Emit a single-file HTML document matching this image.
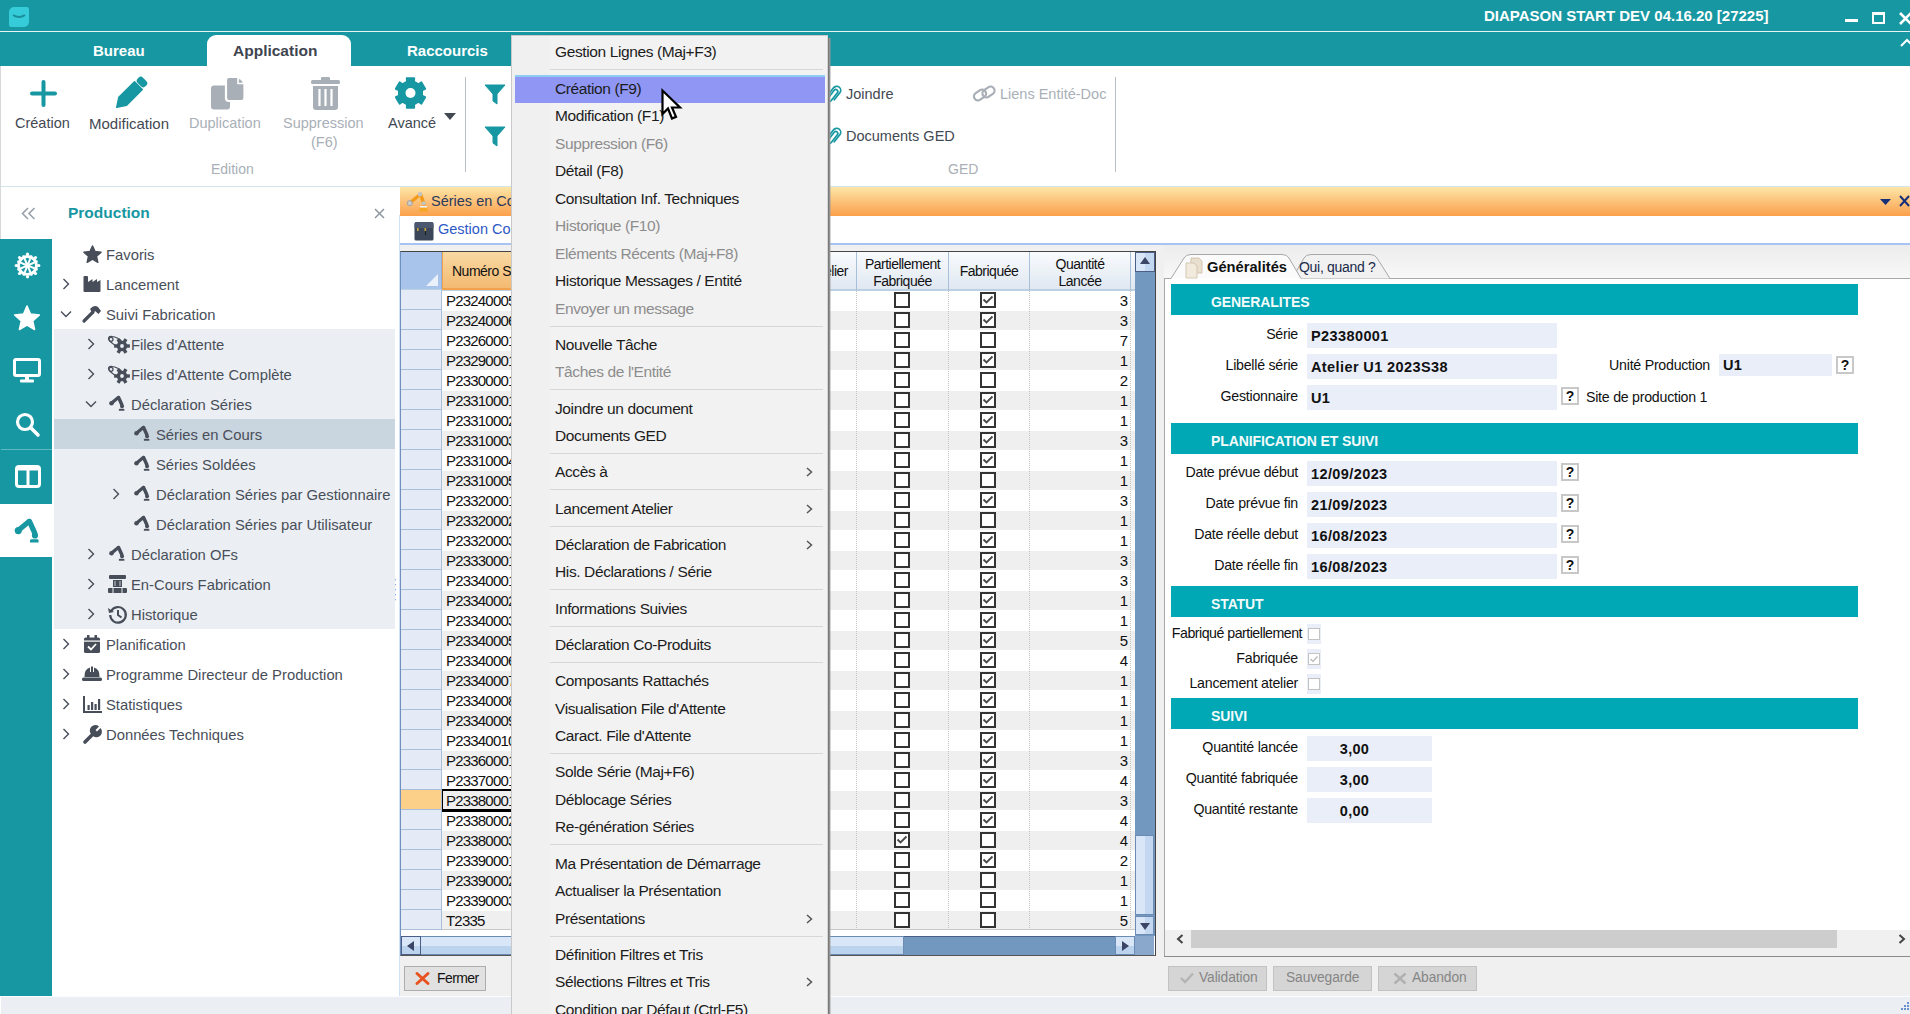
<!DOCTYPE html><html><head><meta charset="utf-8"><title>Diapason</title><style>
*{margin:0;padding:0;box-sizing:border-box}
html,body{width:1910px;height:1014px;overflow:hidden;background:#fff;font-family:"Liberation Sans",sans-serif;position:relative}
.a{position:absolute}
.t{position:absolute;white-space:nowrap;line-height:1}
svg{position:absolute;overflow:visible}
</style></head><body>
<div class="a" style="left:0;top:0;width:1910px;height:31px;background:#1797a2"></div>
<div class="a" style="left:0;top:31px;width:1910px;height:1px;background:#e8f4f5"></div>
<div class="a" style="left:0;top:32px;width:1910px;height:34px;background:#1797a2"></div>
<div class="a" style="left:0;top:66px;width:1px;height:930px;background:#d6d9dc"></div>
<div class="a" style="left:9px;top:7px;width:20px;height:20px;background:#35cbd9;border-radius:5px 2px 5px 2px"></div>
<svg style="left:12px;top:14px" width="14" height="6"><path d="M1 1 Q7 5 13 1" stroke="#1b8f99" stroke-width="2" fill="none"/></svg>
<div class="t" style="left:1484px;top:8px;font-size:15px;font-weight:bold;color:#fff">DIAPASON START DEV 04.16.20 [27225]</div>
<div class="a" style="left:1845px;top:19px;width:13px;height:3px;background:#fff"></div>
<div class="a" style="left:1872px;top:12px;width:13px;height:12px;border:2px solid #fff;border-top-width:3px"></div>
<svg style="left:1899px;top:12px" width="14" height="13"><path d="M1 1 L12 12 M12 1 L1 12" stroke="#fff" stroke-width="2.6"/></svg>
<svg style="left:1900px;top:39px" width="14" height="8"><path d="M1 7 L7 1 L13 7" stroke="#fff" stroke-width="2" fill="none"/></svg>
<div class="t" style="left:93px;top:43px;font-size:15px;font-weight:bold;color:#fff">Bureau</div>
<div class="a" style="left:207px;top:35px;width:144px;height:31px;background:#fff;border-radius:9px 9px 0 0"></div>
<div class="t" style="left:233px;top:43px;font-size:15.5px;font-weight:bold;color:#3f4550">Application</div>
<div class="t" style="left:407px;top:43px;font-size:15px;font-weight:bold;color:#fff">Raccourcis</div>
<div class="a" style="left:1px;top:186px;width:1909px;height:1px;background:#d5e3ea"></div>
<svg style="left:30px;top:80px" width="27" height="27"><path d="M13.5 2 V25 M2 13.5 H25" stroke="#1797a2" stroke-width="4" stroke-linecap="round"/></svg>
<div class="t" style="left:15px;top:116px;font-size:14.5px;color:#434953">Création</div>
<svg style="left:113px;top:76px" width="35" height="35"><g transform="rotate(45 17.5 17.5)"><rect x="12" y="-2.5" width="11" height="7.5" rx="3.2" fill="#1797a2"/><path d="M12 6.3 H23 V28.5 L17.5 37 L12 28.5 Z" fill="#1797a2" stroke="#1797a2" stroke-linejoin="round" stroke-width="1.5"/></g></svg>
<div class="t" style="left:89px;top:116px;font-size:15px;color:#434953">Modification</div>
<svg style="left:211px;top:76px" width="34" height="34"><rect x="0" y="9.5" width="19" height="24" rx="3" fill="#a9afb7"/><path d="M15 4 Q15 1 18 1 H27 L33.5 7.5 V22 Q33.5 25 30.5 25 H18 Q15 25 15 22 Z" fill="#a9afb7" stroke="#fff" stroke-width="2.2"/><path d="M27 1 V7.5 H33.5" fill="none" stroke="#fff" stroke-width="1.6"/><path d="M28.3 2.5 L32 6.3 H28.3 Z" fill="#a9afb7"/></svg>
<div class="t" style="left:189px;top:116px;font-size:14.5px;color:#a9afb7">Duplication</div>
<svg style="left:311px;top:77px" width="30" height="33"><rect x="0" y="3" width="29" height="4" rx="1.5" fill="#a9afb7"/><rect x="10" y="0" width="9" height="4" rx="1" fill="#a9afb7"/><path d="M2 9 H27 V30 Q27 33 24 33 H5 Q2 33 2 30 Z" fill="#a9afb7"/><path d="M8.5 12 V29 M14.5 12 V29 M20.5 12 V29" stroke="#fff" stroke-width="2.2"/></svg>
<div class="t" style="left:283px;top:116px;font-size:14.5px;color:#a9afb7">Suppression</div>
<div class="t" style="left:311px;top:135px;font-size:14.5px;color:#a9afb7">(F6)</div>
<svg style="left:395px;top:77px" width="31" height="33"><path d="M11.8 1.3 L19.2 1.3 L18.9 4.7 L23.5 7.4 L26.4 5.4 L30.1 11.8 L27.0 13.3 L27.0 18.7 L30.1 20.2 L26.4 26.6 L23.5 24.6 L18.9 27.3 L19.2 30.7 L11.8 30.7 L12.1 27.3 L7.5 24.6 L4.6 26.6 L0.9 20.2 L4.0 18.7 L4.0 13.3 L0.9 11.8 L4.6 5.4 L7.5 7.4 L12.1 4.7 Z" fill="#1797a2" stroke="#1797a2" stroke-width="2" stroke-linejoin="round"/><circle cx="15.5" cy="16" r="5" fill="#fff"/></svg>
<div class="t" style="left:388px;top:116px;font-size:14.5px;color:#434953">Avancé</div>
<svg style="left:444px;top:113px" width="12" height="7"><path d="M0 0 H12 L6 7 Z" fill="#434953"/></svg>
<div class="t" style="left:211px;top:162px;font-size:14px;color:#a9afb7">Edition</div>
<div class="a" style="left:465px;top:77px;width:1px;height:95px;background:#b8bec5"></div>
<svg style="left:485px;top:85px" width="20" height="19"><path d="M0 0 H20 L12 9 V19 L8 16 V9 Z" fill="#1797a2" stroke="#1797a2" stroke-linejoin="round"/></svg>
<svg style="left:485px;top:127px" width="20" height="19"><path d="M0 0 H20 L12 9 V19 L8 16 V9 Z" fill="#1797a2" stroke="#1797a2" stroke-linejoin="round"/></svg>
<svg style="left:826px;top:85px" width="14" height="20"><g transform="rotate(38 7 10)" fill="none" stroke="#1797a2" stroke-width="1.7" stroke-linecap="round"><path d="M5 14 V5.5 A2 2 0 0 1 9 5.5 V15 A3 3 0 0 1 3 15 V4 A4 4 0 0 1 11 4 V13"/></g></svg>
<div class="t" style="left:846px;top:87px;font-size:14.5px;color:#434953">Joindre</div>
<svg style="left:826px;top:127px" width="14" height="20"><g transform="rotate(38 7 10)" fill="none" stroke="#1797a2" stroke-width="1.7" stroke-linecap="round"><path d="M5 14 V5.5 A2 2 0 0 1 9 5.5 V15 A3 3 0 0 1 3 15 V4 A4 4 0 0 1 11 4 V13"/></g></svg>
<div class="t" style="left:846px;top:129px;font-size:14.5px;color:#434953">Documents GED</div>
<svg style="left:972px;top:85px" width="26" height="18"><g fill="none" stroke="#a9afb7" stroke-width="2.2"><rect x="1.5" y="6" width="13" height="8" rx="4" transform="rotate(-35 8 10)"/><rect x="10" y="3" width="13" height="8" rx="4" transform="rotate(-35 16.5 7)"/></g></svg>
<div class="t" style="left:1000px;top:87px;font-size:14.5px;color:#a9afb7">Liens Entité-Doc</div>
<div class="t" style="left:948px;top:162px;font-size:14px;color:#a9afb7">GED</div>
<div class="a" style="left:1115px;top:77px;width:1px;height:95px;background:#b8bec5"></div>
<div class="a" style="left:0;top:239px;width:52px;height:757px;background:#1797a2"></div>
<div class="a" style="left:1px;top:449px;width:51px;height:1px;background:#5fb9c0"></div>
<div class="a" style="left:0;top:504px;width:52px;height:53px;background:#fff"></div>
<svg style="left:15px;top:253px" width="25" height="25"><g stroke="#fff" stroke-width="2" fill="none"><circle cx="12.5" cy="12.5" r="9" stroke-width="3"/><line x1="12.5" y1="12.5" x2="22.7" y2="16.6"/><line x1="12.5" y1="12.5" x2="16.8" y2="22.6"/><line x1="12.5" y1="12.5" x2="8.4" y2="22.7"/><line x1="12.5" y1="12.5" x2="2.4" y2="16.8"/><line x1="12.5" y1="12.5" x2="2.3" y2="8.4"/><line x1="12.5" y1="12.5" x2="8.2" y2="2.4"/><line x1="12.5" y1="12.5" x2="16.6" y2="2.3"/><line x1="12.5" y1="12.5" x2="22.6" y2="8.2"/></g><g fill="#fff"><circle cx="23.8" cy="12.5" r="1.6"/><circle cx="20.5" cy="20.5" r="1.6"/><circle cx="12.5" cy="23.8" r="1.6"/><circle cx="4.5" cy="20.5" r="1.6"/><circle cx="1.2" cy="12.5" r="1.6"/><circle cx="4.5" cy="4.5" r="1.6"/><circle cx="12.5" cy="1.2" r="1.6"/><circle cx="20.5" cy="4.5" r="1.6"/></g><circle cx="12.5" cy="12.5" r="2.6" fill="#fff"/></svg>
<svg style="left:13px;top:304px" width="28" height="28"><path d="M14.0 2.0 L17.5 10.1 L26.4 11.0 L19.7 16.9 L21.6 25.5 L14.0 21.0 L6.4 25.5 L8.3 16.9 L1.6 11.0 L10.5 10.1 Z" fill="#fff" stroke="#fff" stroke-width="1.5" stroke-linejoin="round"/></svg>
<svg style="left:13px;top:358px" width="28" height="25"><rect x="1.5" y="1.5" width="25" height="16" rx="1.5" fill="none" stroke="#fff" stroke-width="3"/><rect x="12" y="18" width="4" height="4" fill="#fff"/><rect x="7" y="21.5" width="14" height="3" rx="1" fill="#fff"/></svg>
<svg style="left:15px;top:412px" width="26" height="25"><circle cx="10" cy="10" r="7.5" fill="none" stroke="#fff" stroke-width="3.2"/><path d="M15.5 15.5 L23 23" stroke="#fff" stroke-width="3.6" stroke-linecap="round"/></svg>
<svg style="left:15px;top:465px" width="26" height="23"><rect x="1.5" y="1.5" width="23" height="20" rx="2.5" fill="none" stroke="#fff" stroke-width="3"/><rect x="1.5" y="1.5" width="23" height="4" fill="#fff"/><path d="M13 4 V21" stroke="#fff" stroke-width="3"/></svg>
<svg style="left:13px;top:516px" width="28" height="30" viewBox="0 0 28 30"><g fill="#1797a2" stroke="#1797a2" stroke-linecap="round"><circle cx="5.3" cy="14.6" r="3.6" stroke="none"/><path d="M7.5 12.5 L16 5.5" stroke-width="5.2"/><path d="M16.5 5.5 L21.5 16.5" stroke-width="5.4"/><circle cx="22" cy="19.4" r="3.1" stroke="none"/><path d="M17 26.6 V24.5 Q17 23.2 18.5 23.2 H24.2 Q25.6 23.2 25.6 24.5 V26.6 Z" stroke="none"/></g></svg>
<svg style="left:21px;top:207px" width="15" height="13"><path d="M7 1 L1.5 6.5 L7 12 M13.5 1 L8 6.5 L13.5 12" stroke="#98a0aa" stroke-width="1.6" fill="none"/></svg>
<div class="t" style="left:68px;top:205px;font-size:15.5px;font-weight:bold;color:#1797a2">Production</div>
<svg style="left:374px;top:208px" width="11" height="11"><path d="M1 1 L10 10 M10 1 L1 10" stroke="#8e969f" stroke-width="1.5"/></svg>
<div class="a" style="left:54px;top:329px;width:341px;height:300px;background:#ebeff3"></div>
<div class="a" style="left:54px;top:419px;width:341px;height:30px;background:#c9d5df"></div>
<svg style="left:83px;top:245px" width="19" height="19"><path d="M9.5 1.0 L12.0 6.6 L18.1 7.2 L13.5 11.3 L14.8 17.3 L9.5 14.2 L4.2 17.3 L5.5 11.3 L0.9 7.2 L7.0 6.6 Z" fill="#484e59" stroke="#484e59" stroke-width="1.5" stroke-linejoin="round"/></svg>
<div class="t" style="left:106px;top:247.9px;font-size:14.8px;color:#484e59">Favoris</div>
<svg style="left:62px;top:278px" width="8" height="12"><path d="M1.5 1 L6.5 6 L1.5 11" stroke="#484e59" stroke-width="1.4" fill="none"/></svg>
<svg style="left:83px;top:276px" width="18" height="16"><path d="M0.5 1 Q0.5 0 1.5 0 H4 Q5 0 5 1 V6 L9.5 3 V6 L14 3 V6 L17.5 4 V15 Q17.5 16 16.5 16 H1.5 Q0.5 16 0.5 15 Z" fill="#484e59"/></svg>
<div class="t" style="left:106px;top:277.9px;font-size:14.8px;color:#484e59">Lancement</div>
<svg style="left:60px;top:310px" width="12" height="8"><path d="M1 1.5 L6 6.5 L11 1.5" stroke="#484e59" stroke-width="1.4" fill="none"/></svg>
<svg style="left:82px;top:305px" width="20" height="18"><path d="M2 16 L11 7" stroke="#484e59" stroke-width="3.2" stroke-linecap="round"/><path d="M8 4 Q12 -1 16 2 L19 6 L16.5 9 L13 6 L10.5 8.5 Z" fill="#484e59"/></svg>
<div class="t" style="left:106px;top:307.9px;font-size:14.8px;color:#484e59">Suivi Fabrication</div>
<svg style="left:87px;top:338px" width="8" height="12"><path d="M1.5 1 L6.5 6 L1.5 11" stroke="#484e59" stroke-width="1.4" fill="none"/></svg>
<svg style="left:107px;top:335px" width="22" height="19"><ellipse cx="9" cy="6.5" rx="8.3" ry="3.6" transform="rotate(28 9 6.5)" fill="none" stroke="#484e59" stroke-width="1.2"/><circle cx="4" cy="4.3" r="2" fill="none" stroke="#484e59" stroke-width="1.3"/><rect x="19.5" y="9.3" width="3.4" height="3.4" transform="rotate(0 21.2 11.0)" fill="#484e59"/><rect x="16.4" y="14.7" width="3.4" height="3.4" transform="rotate(60 18.1 16.4)" fill="#484e59"/><rect x="10.2" y="14.7" width="3.4" height="3.4" transform="rotate(120 11.9 16.4)" fill="#484e59"/><rect x="7.1" y="9.3" width="3.4" height="3.4" transform="rotate(180 8.8 11.0)" fill="#484e59"/><rect x="10.2" y="3.9" width="3.4" height="3.4" transform="rotate(240 11.9 5.6)" fill="#484e59"/><rect x="16.4" y="3.9" width="3.4" height="3.4" transform="rotate(300 18.1 5.6)" fill="#484e59"/><circle cx="15" cy="11" r="5.3" fill="#484e59"/><circle cx="15" cy="11" r="1.9" fill="#ebeff3"/></svg>
<div class="t" style="left:131px;top:337.9px;font-size:14.8px;color:#484e59">Files d'Attente</div>
<svg style="left:87px;top:368px" width="8" height="12"><path d="M1.5 1 L6.5 6 L1.5 11" stroke="#484e59" stroke-width="1.4" fill="none"/></svg>
<svg style="left:107px;top:365px" width="22" height="19"><ellipse cx="9" cy="6.5" rx="8.3" ry="3.6" transform="rotate(28 9 6.5)" fill="none" stroke="#484e59" stroke-width="1.2"/><circle cx="4" cy="4.3" r="2" fill="none" stroke="#484e59" stroke-width="1.3"/><rect x="19.5" y="9.3" width="3.4" height="3.4" transform="rotate(0 21.2 11.0)" fill="#484e59"/><rect x="16.4" y="14.7" width="3.4" height="3.4" transform="rotate(60 18.1 16.4)" fill="#484e59"/><rect x="10.2" y="14.7" width="3.4" height="3.4" transform="rotate(120 11.9 16.4)" fill="#484e59"/><rect x="7.1" y="9.3" width="3.4" height="3.4" transform="rotate(180 8.8 11.0)" fill="#484e59"/><rect x="10.2" y="3.9" width="3.4" height="3.4" transform="rotate(240 11.9 5.6)" fill="#484e59"/><rect x="16.4" y="3.9" width="3.4" height="3.4" transform="rotate(300 18.1 5.6)" fill="#484e59"/><circle cx="15" cy="11" r="5.3" fill="#484e59"/><circle cx="15" cy="11" r="1.9" fill="#ebeff3"/></svg>
<div class="t" style="left:131px;top:367.9px;font-size:14.8px;color:#484e59">Files d'Attente Complète</div>
<svg style="left:85px;top:400px" width="12" height="8"><path d="M1 1.5 L6 6.5 L11 1.5" stroke="#484e59" stroke-width="1.4" fill="none"/></svg>
<svg style="left:108px;top:394px" width="18" height="19" viewBox="0 0 28 30"><g fill="#484e59" stroke="#484e59" stroke-linecap="round"><circle cx="5.3" cy="14.6" r="3.6" stroke="none"/><path d="M7.5 12.5 L16 5.5" stroke-width="5.2"/><path d="M16.5 5.5 L21.5 16.5" stroke-width="5.4"/><circle cx="22" cy="19.4" r="3.1" stroke="none"/><path d="M17 26.6 V24.5 Q17 23.2 18.5 23.2 H24.2 Q25.6 23.2 25.6 24.5 V26.6 Z" stroke="none"/></g></svg>
<div class="t" style="left:131px;top:397.9px;font-size:14.8px;color:#484e59">Déclaration Séries</div>
<svg style="left:133px;top:424px" width="18" height="19" viewBox="0 0 28 30"><g fill="#484e59" stroke="#484e59" stroke-linecap="round"><circle cx="5.3" cy="14.6" r="3.6" stroke="none"/><path d="M7.5 12.5 L16 5.5" stroke-width="5.2"/><path d="M16.5 5.5 L21.5 16.5" stroke-width="5.4"/><circle cx="22" cy="19.4" r="3.1" stroke="none"/><path d="M17 26.6 V24.5 Q17 23.2 18.5 23.2 H24.2 Q25.6 23.2 25.6 24.5 V26.6 Z" stroke="none"/></g></svg>
<div class="t" style="left:156px;top:427.9px;font-size:14.8px;color:#484e59">Séries en Cours</div>
<svg style="left:133px;top:454px" width="18" height="19" viewBox="0 0 28 30"><g fill="#484e59" stroke="#484e59" stroke-linecap="round"><circle cx="5.3" cy="14.6" r="3.6" stroke="none"/><path d="M7.5 12.5 L16 5.5" stroke-width="5.2"/><path d="M16.5 5.5 L21.5 16.5" stroke-width="5.4"/><circle cx="22" cy="19.4" r="3.1" stroke="none"/><path d="M17 26.6 V24.5 Q17 23.2 18.5 23.2 H24.2 Q25.6 23.2 25.6 24.5 V26.6 Z" stroke="none"/></g></svg>
<div class="t" style="left:156px;top:457.9px;font-size:14.8px;color:#484e59">Séries Soldées</div>
<svg style="left:112px;top:488px" width="8" height="12"><path d="M1.5 1 L6.5 6 L1.5 11" stroke="#484e59" stroke-width="1.4" fill="none"/></svg>
<svg style="left:133px;top:484px" width="18" height="19" viewBox="0 0 28 30"><g fill="#484e59" stroke="#484e59" stroke-linecap="round"><circle cx="5.3" cy="14.6" r="3.6" stroke="none"/><path d="M7.5 12.5 L16 5.5" stroke-width="5.2"/><path d="M16.5 5.5 L21.5 16.5" stroke-width="5.4"/><circle cx="22" cy="19.4" r="3.1" stroke="none"/><path d="M17 26.6 V24.5 Q17 23.2 18.5 23.2 H24.2 Q25.6 23.2 25.6 24.5 V26.6 Z" stroke="none"/></g></svg>
<div class="t" style="left:156px;top:487.9px;font-size:14.8px;color:#484e59">Déclaration Séries par Gestionnaire</div>
<svg style="left:133px;top:514px" width="18" height="19" viewBox="0 0 28 30"><g fill="#484e59" stroke="#484e59" stroke-linecap="round"><circle cx="5.3" cy="14.6" r="3.6" stroke="none"/><path d="M7.5 12.5 L16 5.5" stroke-width="5.2"/><path d="M16.5 5.5 L21.5 16.5" stroke-width="5.4"/><circle cx="22" cy="19.4" r="3.1" stroke="none"/><path d="M17 26.6 V24.5 Q17 23.2 18.5 23.2 H24.2 Q25.6 23.2 25.6 24.5 V26.6 Z" stroke="none"/></g></svg>
<div class="t" style="left:156px;top:517.9px;font-size:14.8px;color:#484e59">Déclaration Séries par Utilisateur</div>
<svg style="left:87px;top:548px" width="8" height="12"><path d="M1.5 1 L6.5 6 L1.5 11" stroke="#484e59" stroke-width="1.4" fill="none"/></svg>
<svg style="left:108px;top:544px" width="18" height="19" viewBox="0 0 28 30"><g fill="#484e59" stroke="#484e59" stroke-linecap="round"><circle cx="5.3" cy="14.6" r="3.6" stroke="none"/><path d="M7.5 12.5 L16 5.5" stroke-width="5.2"/><path d="M16.5 5.5 L21.5 16.5" stroke-width="5.4"/><circle cx="22" cy="19.4" r="3.1" stroke="none"/><path d="M17 26.6 V24.5 Q17 23.2 18.5 23.2 H24.2 Q25.6 23.2 25.6 24.5 V26.6 Z" stroke="none"/></g></svg>
<div class="t" style="left:131px;top:547.9px;font-size:14.8px;color:#484e59">Déclaration OFs</div>
<svg style="left:87px;top:578px" width="8" height="12"><path d="M1.5 1 L6.5 6 L1.5 11" stroke="#484e59" stroke-width="1.4" fill="none"/></svg>
<svg style="left:108px;top:575px" width="19" height="18"><rect x="1" y="0" width="17" height="4" rx="1" fill="#484e59"/><rect x="5" y="5" width="9" height="7" fill="#484e59"/><rect x="0" y="13" width="19" height="5" rx="1" fill="#484e59"/><path d="M7 6 V11 M12 6 V11" stroke="#ebeff3" stroke-width="0.8"/><path d="M5 13 V18 M14 13 V18" stroke="#ebeff3" stroke-width="1"/></svg>
<div class="t" style="left:131px;top:577.9px;font-size:14.8px;color:#484e59">En-Cours Fabrication</div>
<svg style="left:87px;top:608px" width="8" height="12"><path d="M1.5 1 L6.5 6 L1.5 11" stroke="#484e59" stroke-width="1.4" fill="none"/></svg>
<svg style="left:108px;top:605px" width="19" height="19"><path d="M3.2 6 A7.8 7.8 0 1 1 2.2 10" stroke="#484e59" stroke-width="2.2" fill="none"/><path d="M0 3 L1 8 L6 7 Z" fill="#484e59"/><path d="M10 5 V10 L13.5 12.5" stroke="#484e59" stroke-width="2" fill="none"/></svg>
<div class="t" style="left:131px;top:607.9px;font-size:14.8px;color:#484e59">Historique</div>
<svg style="left:62px;top:638px" width="8" height="12"><path d="M1.5 1 L6.5 6 L1.5 11" stroke="#484e59" stroke-width="1.4" fill="none"/></svg>
<svg style="left:84px;top:635px" width="16" height="18"><rect x="0" y="2.5" width="16" height="15.5" rx="1.5" fill="#484e59"/><rect x="3" y="0" width="2.5" height="4" fill="#484e59"/><rect x="10.5" y="0" width="2.5" height="4" fill="#484e59"/><rect x="0" y="5.5" width="16" height="1.2" fill="#fff"/><path d="M4 11.5 L7 14.5 L12 9" stroke="#fff" stroke-width="1.8" fill="none"/></svg>
<div class="t" style="left:106px;top:637.9px;font-size:14.8px;color:#484e59">Planification</div>
<svg style="left:62px;top:668px" width="8" height="12"><path d="M1.5 1 L6.5 6 L1.5 11" stroke="#484e59" stroke-width="1.4" fill="none"/></svg>
<svg style="left:82px;top:666px" width="20" height="15"><path d="M2.5 11 Q2 3 8 1.5 V6 H9 V0.5 H11 V6 H12 V1.5 Q18 3 17.5 11 Z" fill="#484e59"/><rect x="0" y="11.5" width="20" height="3.5" rx="1.5" fill="#484e59"/></svg>
<div class="t" style="left:106px;top:667.9px;font-size:14.8px;color:#484e59">Programme Directeur de Production</div>
<svg style="left:62px;top:698px" width="8" height="12"><path d="M1.5 1 L6.5 6 L1.5 11" stroke="#484e59" stroke-width="1.4" fill="none"/></svg>
<svg style="left:83px;top:696px" width="19" height="17"><path d="M1 0 V16 H19" stroke="#484e59" stroke-width="2" fill="none"/><rect x="4.5" y="9" width="2.2" height="5" fill="#484e59"/><rect x="8" y="6" width="2.2" height="8" fill="#484e59"/><rect x="11.5" y="8" width="2.2" height="6" fill="#484e59"/><rect x="15" y="3" width="2.2" height="11" fill="#484e59"/></svg>
<div class="t" style="left:106px;top:697.9px;font-size:14.8px;color:#484e59">Statistiques</div>
<svg style="left:62px;top:728px" width="8" height="12"><path d="M1.5 1 L6.5 6 L1.5 11" stroke="#484e59" stroke-width="1.4" fill="none"/></svg>
<svg style="left:83px;top:725px" width="19" height="19"><path d="M2 17 L10 9" stroke="#484e59" stroke-width="3.6" stroke-linecap="round"/><path d="M8 9 A5.5 5.5 0 0 1 16 1.5 L12.5 5 L14 6.5 L17.5 3 A5.5 5.5 0 0 1 10 11 Z" fill="#484e59"/></svg>
<div class="t" style="left:106px;top:727.9px;font-size:14.8px;color:#484e59">Données Techniques</div>
<svg style="left:395px;top:578px" width="5" height="22"><path d="M0 2 L4 0 M0 7 L4 5 M0 12 L4 10 M0 17 L4 15 M0 22 L4 20" stroke="#5a8fe0" stroke-width="1"/></svg>
<div class="a" style="left:1px;top:996px;width:1909px;height:18px;background:#ebeff3;border-top:1px solid #fbfcfd"></div>
<svg style="left:1898px;top:1002px" width="12" height="12"><g fill="#6a8fd0"><rect x="9" y="0" width="2" height="2"/><rect x="6" y="3" width="2" height="2"/><rect x="9" y="3" width="2" height="2"/><rect x="3" y="6" width="2" height="2"/><rect x="6" y="6" width="2" height="2"/><rect x="9" y="6" width="2" height="2"/></g></svg>
<div class="a" style="left:396px;top:187px;width:1514px;height:809px;background:#f0f0f0"></div>
<div class="a" style="left:396px;top:187px;width:4px;height:809px;background:#fff"></div>
<div class="a" style="left:399px;top:215px;width:1px;height:781px;background:#cfe0f7"></div>
<div class="a" style="left:400px;top:187px;width:1510px;height:29px;background:linear-gradient(#fde6a6,#fcc27a 50%,#fba04b)"></div>
<div class="a" style="left:400px;top:216px;width:1510px;height:28px;background:#fff"></div>
<div class="a" style="left:400px;top:243px;width:1510px;height:2px;background:#a6c3f3"></div>
<svg style="left:405px;top:188px" width="26" height="26"><g stroke-linecap="round"><path d="M5 15 L15 6.5" stroke="#f39a1a" stroke-width="3.2"/><path d="M15.5 6.5 L19 16" stroke="#f39a1a" stroke-width="3.6"/></g><circle cx="4.8" cy="15.2" r="2.6" fill="#c9c9c9" stroke="#9a9a9a" stroke-width="0.8"/><circle cx="15" cy="6.3" r="2.2" fill="#c4c4c4"/><circle cx="18.8" cy="15.2" r="2" fill="#c4c4c4"/><path d="M15 19.5 H22 L23 23.5 H14 Z" fill="#f6a623"/><rect x="15" y="18" width="7" height="1.5" fill="#f3f3f3"/></svg>
<div class="t" style="left:431px;top:194px;font-size:14.5px;color:#2a3a5c">Séries en Cours</div>
<svg style="left:413px;top:220px" width="22" height="22"><path d="M1.5 4 Q1.5 2 3.5 2 H18.5 Q20.5 2 20.5 4 V19 Q20.5 20.5 19 20.5 H3 Q1.5 20.5 1.5 19 Z" fill="#3b4759"/><path d="M1.5 4 Q1.5 2 3.5 2 H18.5 Q20.5 2 20.5 4 V8 H1.5 Z" fill="#4b5870"/><rect x="4" y="8" width="1.6" height="3" fill="#c9a23a"/><rect x="11.5" y="8" width="1.6" height="3" fill="#c9a23a"/><rect x="12" y="11" width="0.8" height="4" fill="#111"/></svg>
<div class="t" style="left:438px;top:222px;font-size:14.5px;color:#2c58c4">Gestion Commandes</div>
<svg style="left:1880px;top:199px" width="11" height="6"><path d="M0 0 H11 L5.5 6 Z" fill="#15307a"/></svg>
<svg style="left:1899px;top:195px" width="11" height="12"><path d="M1 1 L10 11 M10 1 L1 11" stroke="#15307a" stroke-width="2"/></svg>
<div class="a" style="left:400px;top:251px;width:756px;height:705px;background:#fff;border:1px solid #555;border-left-color:#6f8fbf;border-top-color:#444;border-right-color:#444"></div>
<div class="a" style="left:401px;top:252px;width:734px;height:38px;background:linear-gradient(#f9fbfd,#dfe7f1)"></div>
<div class="a" style="left:401px;top:252px;width:41px;height:38px;background:#a8c4ea;border-right:1px solid #8fb0dc"></div>
<svg style="left:426px;top:274px" width="12" height="12"><path d="M12 0 V12 H0 Z" fill="#eaf1fb"/></svg>
<div class="a" style="left:442px;top:252px;width:290px;height:38px;background:linear-gradient(#f8d9a3,#f3b86f);border-left:1px solid #f2a24c"></div>
<div class="t" style="left:452px;top:264px;font-size:14px;letter-spacing:-0.5px;color:#111">Numéro Série</div>
<div class="a" style="left:401px;top:289px;width:734px;height:2px;background:#bcd0e4"></div>
<div class="a" style="left:856px;top:252px;width:1px;height:38px;background:#a9c0da"></div>
<div class="a" style="left:948px;top:252px;width:1px;height:38px;background:#a9c0da"></div>
<div class="a" style="left:1029px;top:252px;width:1px;height:38px;background:#a9c0da"></div>
<div class="a" style="left:1130px;top:252px;width:1px;height:38px;background:#a9c0da"></div>
<div class="t" style="left:736px;top:264px;font-size:14px;letter-spacing:-0.5px;color:#111;width:112px;text-align:right">Lancement Atelier</div>
<div class="t" style="left:857px;top:256px;font-size:14px;letter-spacing:-0.5px;color:#111;text-align:center;width:91px;line-height:16.5px;white-space:normal">Partiellement<br>Fabriquée</div>
<div class="t" style="left:949px;top:264px;width:80px;text-align:center;font-size:14px;letter-spacing:-0.5px;color:#111">Fabriquée</div>
<div class="t" style="left:1030px;top:256px;font-size:14px;letter-spacing:-0.5px;color:#111;text-align:center;width:100px;line-height:16.5px;white-space:normal">Quantité<br>Lancée</div>
<div class="a" style="left:401px;top:290px;width:41px;height:20px;background:#e4ebf6;border-bottom:1px solid #a9bfda;border-right:1px solid #a9bfda"></div>
<div class="t" style="left:446px;top:292.5px;font-size:15px;letter-spacing:-0.8px;color:#111">P23240005</div>
<div class="a" style="left:894px;top:292px;width:16px;height:16px;border:2px solid #333;background:#fff"></div>
<div class="a" style="left:980px;top:292px;width:16px;height:16px;border:2px solid #333;background:#fff"></div><svg style="left:983px;top:296px" width="10" height="8"><path d="M0.5 3.5 L3.5 6.5 L9.5 0.5" stroke="#4a4a4a" stroke-width="1.9" fill="none"/></svg>
<div class="t" style="left:1100px;top:292.5px;width:28px;text-align:right;font-size:15px;color:#111">3</div>
<div class="a" style="left:442px;top:311px;width:693px;height:18.6px;background:#efefef"></div>
<div class="a" style="left:401px;top:310px;width:41px;height:20px;background:#e4ebf6;border-bottom:1px solid #a9bfda;border-right:1px solid #a9bfda"></div>
<div class="t" style="left:446px;top:312.5px;font-size:15px;letter-spacing:-0.8px;color:#111">P23240006</div>
<div class="a" style="left:894px;top:312px;width:16px;height:16px;border:2px solid #333;background:#fff"></div>
<div class="a" style="left:980px;top:312px;width:16px;height:16px;border:2px solid #333;background:#fff"></div><svg style="left:983px;top:316px" width="10" height="8"><path d="M0.5 3.5 L3.5 6.5 L9.5 0.5" stroke="#4a4a4a" stroke-width="1.9" fill="none"/></svg>
<div class="t" style="left:1100px;top:312.5px;width:28px;text-align:right;font-size:15px;color:#111">3</div>
<div class="a" style="left:401px;top:330px;width:41px;height:20px;background:#e4ebf6;border-bottom:1px solid #a9bfda;border-right:1px solid #a9bfda"></div>
<div class="t" style="left:446px;top:332.5px;font-size:15px;letter-spacing:-0.8px;color:#111">P23260001</div>
<div class="a" style="left:894px;top:332px;width:16px;height:16px;border:2px solid #333;background:#fff"></div>
<div class="a" style="left:980px;top:332px;width:16px;height:16px;border:2px solid #333;background:#fff"></div>
<div class="t" style="left:1100px;top:332.5px;width:28px;text-align:right;font-size:15px;color:#111">7</div>
<div class="a" style="left:442px;top:351px;width:693px;height:18.6px;background:#efefef"></div>
<div class="a" style="left:401px;top:350px;width:41px;height:20px;background:#e4ebf6;border-bottom:1px solid #a9bfda;border-right:1px solid #a9bfda"></div>
<div class="t" style="left:446px;top:352.5px;font-size:15px;letter-spacing:-0.8px;color:#111">P23290001</div>
<div class="a" style="left:894px;top:352px;width:16px;height:16px;border:2px solid #333;background:#fff"></div>
<div class="a" style="left:980px;top:352px;width:16px;height:16px;border:2px solid #333;background:#fff"></div><svg style="left:983px;top:356px" width="10" height="8"><path d="M0.5 3.5 L3.5 6.5 L9.5 0.5" stroke="#4a4a4a" stroke-width="1.9" fill="none"/></svg>
<div class="t" style="left:1100px;top:352.5px;width:28px;text-align:right;font-size:15px;color:#111">1</div>
<div class="a" style="left:401px;top:370px;width:41px;height:20px;background:#e4ebf6;border-bottom:1px solid #a9bfda;border-right:1px solid #a9bfda"></div>
<div class="t" style="left:446px;top:372.5px;font-size:15px;letter-spacing:-0.8px;color:#111">P23300001</div>
<div class="a" style="left:894px;top:372px;width:16px;height:16px;border:2px solid #333;background:#fff"></div>
<div class="a" style="left:980px;top:372px;width:16px;height:16px;border:2px solid #333;background:#fff"></div>
<div class="t" style="left:1100px;top:372.5px;width:28px;text-align:right;font-size:15px;color:#111">2</div>
<div class="a" style="left:442px;top:391px;width:693px;height:18.6px;background:#efefef"></div>
<div class="a" style="left:401px;top:390px;width:41px;height:20px;background:#e4ebf6;border-bottom:1px solid #a9bfda;border-right:1px solid #a9bfda"></div>
<div class="t" style="left:446px;top:392.5px;font-size:15px;letter-spacing:-0.8px;color:#111">P23310001</div>
<div class="a" style="left:894px;top:392px;width:16px;height:16px;border:2px solid #333;background:#fff"></div>
<div class="a" style="left:980px;top:392px;width:16px;height:16px;border:2px solid #333;background:#fff"></div><svg style="left:983px;top:396px" width="10" height="8"><path d="M0.5 3.5 L3.5 6.5 L9.5 0.5" stroke="#4a4a4a" stroke-width="1.9" fill="none"/></svg>
<div class="t" style="left:1100px;top:392.5px;width:28px;text-align:right;font-size:15px;color:#111">1</div>
<div class="a" style="left:401px;top:410px;width:41px;height:20px;background:#e4ebf6;border-bottom:1px solid #a9bfda;border-right:1px solid #a9bfda"></div>
<div class="t" style="left:446px;top:412.5px;font-size:15px;letter-spacing:-0.8px;color:#111">P23310002</div>
<div class="a" style="left:894px;top:412px;width:16px;height:16px;border:2px solid #333;background:#fff"></div>
<div class="a" style="left:980px;top:412px;width:16px;height:16px;border:2px solid #333;background:#fff"></div><svg style="left:983px;top:416px" width="10" height="8"><path d="M0.5 3.5 L3.5 6.5 L9.5 0.5" stroke="#4a4a4a" stroke-width="1.9" fill="none"/></svg>
<div class="t" style="left:1100px;top:412.5px;width:28px;text-align:right;font-size:15px;color:#111">1</div>
<div class="a" style="left:442px;top:431px;width:693px;height:18.6px;background:#efefef"></div>
<div class="a" style="left:401px;top:430px;width:41px;height:20px;background:#e4ebf6;border-bottom:1px solid #a9bfda;border-right:1px solid #a9bfda"></div>
<div class="t" style="left:446px;top:432.5px;font-size:15px;letter-spacing:-0.8px;color:#111">P23310003</div>
<div class="a" style="left:894px;top:432px;width:16px;height:16px;border:2px solid #333;background:#fff"></div>
<div class="a" style="left:980px;top:432px;width:16px;height:16px;border:2px solid #333;background:#fff"></div><svg style="left:983px;top:436px" width="10" height="8"><path d="M0.5 3.5 L3.5 6.5 L9.5 0.5" stroke="#4a4a4a" stroke-width="1.9" fill="none"/></svg>
<div class="t" style="left:1100px;top:432.5px;width:28px;text-align:right;font-size:15px;color:#111">3</div>
<div class="a" style="left:401px;top:450px;width:41px;height:20px;background:#e4ebf6;border-bottom:1px solid #a9bfda;border-right:1px solid #a9bfda"></div>
<div class="t" style="left:446px;top:452.5px;font-size:15px;letter-spacing:-0.8px;color:#111">P23310004</div>
<div class="a" style="left:894px;top:452px;width:16px;height:16px;border:2px solid #333;background:#fff"></div>
<div class="a" style="left:980px;top:452px;width:16px;height:16px;border:2px solid #333;background:#fff"></div><svg style="left:983px;top:456px" width="10" height="8"><path d="M0.5 3.5 L3.5 6.5 L9.5 0.5" stroke="#4a4a4a" stroke-width="1.9" fill="none"/></svg>
<div class="t" style="left:1100px;top:452.5px;width:28px;text-align:right;font-size:15px;color:#111">1</div>
<div class="a" style="left:442px;top:471px;width:693px;height:18.6px;background:#efefef"></div>
<div class="a" style="left:401px;top:470px;width:41px;height:20px;background:#e4ebf6;border-bottom:1px solid #a9bfda;border-right:1px solid #a9bfda"></div>
<div class="t" style="left:446px;top:472.5px;font-size:15px;letter-spacing:-0.8px;color:#111">P23310005</div>
<div class="a" style="left:894px;top:472px;width:16px;height:16px;border:2px solid #333;background:#fff"></div>
<div class="a" style="left:980px;top:472px;width:16px;height:16px;border:2px solid #333;background:#fff"></div>
<div class="t" style="left:1100px;top:472.5px;width:28px;text-align:right;font-size:15px;color:#111">1</div>
<div class="a" style="left:401px;top:490px;width:41px;height:20px;background:#e4ebf6;border-bottom:1px solid #a9bfda;border-right:1px solid #a9bfda"></div>
<div class="t" style="left:446px;top:492.5px;font-size:15px;letter-spacing:-0.8px;color:#111">P23320001</div>
<div class="a" style="left:894px;top:492px;width:16px;height:16px;border:2px solid #333;background:#fff"></div>
<div class="a" style="left:980px;top:492px;width:16px;height:16px;border:2px solid #333;background:#fff"></div><svg style="left:983px;top:496px" width="10" height="8"><path d="M0.5 3.5 L3.5 6.5 L9.5 0.5" stroke="#4a4a4a" stroke-width="1.9" fill="none"/></svg>
<div class="t" style="left:1100px;top:492.5px;width:28px;text-align:right;font-size:15px;color:#111">3</div>
<div class="a" style="left:442px;top:511px;width:693px;height:18.6px;background:#efefef"></div>
<div class="a" style="left:401px;top:510px;width:41px;height:20px;background:#e4ebf6;border-bottom:1px solid #a9bfda;border-right:1px solid #a9bfda"></div>
<div class="t" style="left:446px;top:512.5px;font-size:15px;letter-spacing:-0.8px;color:#111">P23320002</div>
<div class="a" style="left:894px;top:512px;width:16px;height:16px;border:2px solid #333;background:#fff"></div>
<div class="a" style="left:980px;top:512px;width:16px;height:16px;border:2px solid #333;background:#fff"></div>
<div class="t" style="left:1100px;top:512.5px;width:28px;text-align:right;font-size:15px;color:#111">1</div>
<div class="a" style="left:401px;top:530px;width:41px;height:20px;background:#e4ebf6;border-bottom:1px solid #a9bfda;border-right:1px solid #a9bfda"></div>
<div class="t" style="left:446px;top:532.5px;font-size:15px;letter-spacing:-0.8px;color:#111">P23320003</div>
<div class="a" style="left:894px;top:532px;width:16px;height:16px;border:2px solid #333;background:#fff"></div>
<div class="a" style="left:980px;top:532px;width:16px;height:16px;border:2px solid #333;background:#fff"></div><svg style="left:983px;top:536px" width="10" height="8"><path d="M0.5 3.5 L3.5 6.5 L9.5 0.5" stroke="#4a4a4a" stroke-width="1.9" fill="none"/></svg>
<div class="t" style="left:1100px;top:532.5px;width:28px;text-align:right;font-size:15px;color:#111">1</div>
<div class="a" style="left:442px;top:551px;width:693px;height:18.6px;background:#efefef"></div>
<div class="a" style="left:401px;top:550px;width:41px;height:20px;background:#e4ebf6;border-bottom:1px solid #a9bfda;border-right:1px solid #a9bfda"></div>
<div class="t" style="left:446px;top:552.5px;font-size:15px;letter-spacing:-0.8px;color:#111">P23330001</div>
<div class="a" style="left:894px;top:552px;width:16px;height:16px;border:2px solid #333;background:#fff"></div>
<div class="a" style="left:980px;top:552px;width:16px;height:16px;border:2px solid #333;background:#fff"></div><svg style="left:983px;top:556px" width="10" height="8"><path d="M0.5 3.5 L3.5 6.5 L9.5 0.5" stroke="#4a4a4a" stroke-width="1.9" fill="none"/></svg>
<div class="t" style="left:1100px;top:552.5px;width:28px;text-align:right;font-size:15px;color:#111">3</div>
<div class="a" style="left:401px;top:570px;width:41px;height:20px;background:#e4ebf6;border-bottom:1px solid #a9bfda;border-right:1px solid #a9bfda"></div>
<div class="t" style="left:446px;top:572.5px;font-size:15px;letter-spacing:-0.8px;color:#111">P23340001</div>
<div class="a" style="left:894px;top:572px;width:16px;height:16px;border:2px solid #333;background:#fff"></div>
<div class="a" style="left:980px;top:572px;width:16px;height:16px;border:2px solid #333;background:#fff"></div><svg style="left:983px;top:576px" width="10" height="8"><path d="M0.5 3.5 L3.5 6.5 L9.5 0.5" stroke="#4a4a4a" stroke-width="1.9" fill="none"/></svg>
<div class="t" style="left:1100px;top:572.5px;width:28px;text-align:right;font-size:15px;color:#111">3</div>
<div class="a" style="left:442px;top:591px;width:693px;height:18.6px;background:#efefef"></div>
<div class="a" style="left:401px;top:590px;width:41px;height:20px;background:#e4ebf6;border-bottom:1px solid #a9bfda;border-right:1px solid #a9bfda"></div>
<div class="t" style="left:446px;top:592.5px;font-size:15px;letter-spacing:-0.8px;color:#111">P23340002</div>
<div class="a" style="left:894px;top:592px;width:16px;height:16px;border:2px solid #333;background:#fff"></div>
<div class="a" style="left:980px;top:592px;width:16px;height:16px;border:2px solid #333;background:#fff"></div><svg style="left:983px;top:596px" width="10" height="8"><path d="M0.5 3.5 L3.5 6.5 L9.5 0.5" stroke="#4a4a4a" stroke-width="1.9" fill="none"/></svg>
<div class="t" style="left:1100px;top:592.5px;width:28px;text-align:right;font-size:15px;color:#111">1</div>
<div class="a" style="left:401px;top:610px;width:41px;height:20px;background:#e4ebf6;border-bottom:1px solid #a9bfda;border-right:1px solid #a9bfda"></div>
<div class="t" style="left:446px;top:612.5px;font-size:15px;letter-spacing:-0.8px;color:#111">P23340003</div>
<div class="a" style="left:894px;top:612px;width:16px;height:16px;border:2px solid #333;background:#fff"></div>
<div class="a" style="left:980px;top:612px;width:16px;height:16px;border:2px solid #333;background:#fff"></div><svg style="left:983px;top:616px" width="10" height="8"><path d="M0.5 3.5 L3.5 6.5 L9.5 0.5" stroke="#4a4a4a" stroke-width="1.9" fill="none"/></svg>
<div class="t" style="left:1100px;top:612.5px;width:28px;text-align:right;font-size:15px;color:#111">1</div>
<div class="a" style="left:442px;top:631px;width:693px;height:18.6px;background:#efefef"></div>
<div class="a" style="left:401px;top:630px;width:41px;height:20px;background:#e4ebf6;border-bottom:1px solid #a9bfda;border-right:1px solid #a9bfda"></div>
<div class="t" style="left:446px;top:632.5px;font-size:15px;letter-spacing:-0.8px;color:#111">P23340005</div>
<div class="a" style="left:894px;top:632px;width:16px;height:16px;border:2px solid #333;background:#fff"></div>
<div class="a" style="left:980px;top:632px;width:16px;height:16px;border:2px solid #333;background:#fff"></div><svg style="left:983px;top:636px" width="10" height="8"><path d="M0.5 3.5 L3.5 6.5 L9.5 0.5" stroke="#4a4a4a" stroke-width="1.9" fill="none"/></svg>
<div class="t" style="left:1100px;top:632.5px;width:28px;text-align:right;font-size:15px;color:#111">5</div>
<div class="a" style="left:401px;top:650px;width:41px;height:20px;background:#e4ebf6;border-bottom:1px solid #a9bfda;border-right:1px solid #a9bfda"></div>
<div class="t" style="left:446px;top:652.5px;font-size:15px;letter-spacing:-0.8px;color:#111">P23340006</div>
<div class="a" style="left:894px;top:652px;width:16px;height:16px;border:2px solid #333;background:#fff"></div>
<div class="a" style="left:980px;top:652px;width:16px;height:16px;border:2px solid #333;background:#fff"></div><svg style="left:983px;top:656px" width="10" height="8"><path d="M0.5 3.5 L3.5 6.5 L9.5 0.5" stroke="#4a4a4a" stroke-width="1.9" fill="none"/></svg>
<div class="t" style="left:1100px;top:652.5px;width:28px;text-align:right;font-size:15px;color:#111">4</div>
<div class="a" style="left:442px;top:671px;width:693px;height:18.6px;background:#efefef"></div>
<div class="a" style="left:401px;top:670px;width:41px;height:20px;background:#e4ebf6;border-bottom:1px solid #a9bfda;border-right:1px solid #a9bfda"></div>
<div class="t" style="left:446px;top:672.5px;font-size:15px;letter-spacing:-0.8px;color:#111">P23340007</div>
<div class="a" style="left:894px;top:672px;width:16px;height:16px;border:2px solid #333;background:#fff"></div>
<div class="a" style="left:980px;top:672px;width:16px;height:16px;border:2px solid #333;background:#fff"></div><svg style="left:983px;top:676px" width="10" height="8"><path d="M0.5 3.5 L3.5 6.5 L9.5 0.5" stroke="#4a4a4a" stroke-width="1.9" fill="none"/></svg>
<div class="t" style="left:1100px;top:672.5px;width:28px;text-align:right;font-size:15px;color:#111">1</div>
<div class="a" style="left:401px;top:690px;width:41px;height:20px;background:#e4ebf6;border-bottom:1px solid #a9bfda;border-right:1px solid #a9bfda"></div>
<div class="t" style="left:446px;top:692.5px;font-size:15px;letter-spacing:-0.8px;color:#111">P23340008</div>
<div class="a" style="left:894px;top:692px;width:16px;height:16px;border:2px solid #333;background:#fff"></div>
<div class="a" style="left:980px;top:692px;width:16px;height:16px;border:2px solid #333;background:#fff"></div><svg style="left:983px;top:696px" width="10" height="8"><path d="M0.5 3.5 L3.5 6.5 L9.5 0.5" stroke="#4a4a4a" stroke-width="1.9" fill="none"/></svg>
<div class="t" style="left:1100px;top:692.5px;width:28px;text-align:right;font-size:15px;color:#111">1</div>
<div class="a" style="left:442px;top:711px;width:693px;height:18.6px;background:#efefef"></div>
<div class="a" style="left:401px;top:710px;width:41px;height:20px;background:#e4ebf6;border-bottom:1px solid #a9bfda;border-right:1px solid #a9bfda"></div>
<div class="t" style="left:446px;top:712.5px;font-size:15px;letter-spacing:-0.8px;color:#111">P23340009</div>
<div class="a" style="left:894px;top:712px;width:16px;height:16px;border:2px solid #333;background:#fff"></div>
<div class="a" style="left:980px;top:712px;width:16px;height:16px;border:2px solid #333;background:#fff"></div><svg style="left:983px;top:716px" width="10" height="8"><path d="M0.5 3.5 L3.5 6.5 L9.5 0.5" stroke="#4a4a4a" stroke-width="1.9" fill="none"/></svg>
<div class="t" style="left:1100px;top:712.5px;width:28px;text-align:right;font-size:15px;color:#111">1</div>
<div class="a" style="left:401px;top:730px;width:41px;height:20px;background:#e4ebf6;border-bottom:1px solid #a9bfda;border-right:1px solid #a9bfda"></div>
<div class="t" style="left:446px;top:732.5px;font-size:15px;letter-spacing:-0.8px;color:#111">P23340010</div>
<div class="a" style="left:894px;top:732px;width:16px;height:16px;border:2px solid #333;background:#fff"></div>
<div class="a" style="left:980px;top:732px;width:16px;height:16px;border:2px solid #333;background:#fff"></div><svg style="left:983px;top:736px" width="10" height="8"><path d="M0.5 3.5 L3.5 6.5 L9.5 0.5" stroke="#4a4a4a" stroke-width="1.9" fill="none"/></svg>
<div class="t" style="left:1100px;top:732.5px;width:28px;text-align:right;font-size:15px;color:#111">1</div>
<div class="a" style="left:442px;top:751px;width:693px;height:18.6px;background:#efefef"></div>
<div class="a" style="left:401px;top:750px;width:41px;height:20px;background:#e4ebf6;border-bottom:1px solid #a9bfda;border-right:1px solid #a9bfda"></div>
<div class="t" style="left:446px;top:752.5px;font-size:15px;letter-spacing:-0.8px;color:#111">P23360001</div>
<div class="a" style="left:894px;top:752px;width:16px;height:16px;border:2px solid #333;background:#fff"></div>
<div class="a" style="left:980px;top:752px;width:16px;height:16px;border:2px solid #333;background:#fff"></div><svg style="left:983px;top:756px" width="10" height="8"><path d="M0.5 3.5 L3.5 6.5 L9.5 0.5" stroke="#4a4a4a" stroke-width="1.9" fill="none"/></svg>
<div class="t" style="left:1100px;top:752.5px;width:28px;text-align:right;font-size:15px;color:#111">3</div>
<div class="a" style="left:401px;top:770px;width:41px;height:20px;background:#e4ebf6;border-bottom:1px solid #a9bfda;border-right:1px solid #a9bfda"></div>
<div class="t" style="left:446px;top:772.5px;font-size:15px;letter-spacing:-0.8px;color:#111">P23370001</div>
<div class="a" style="left:894px;top:772px;width:16px;height:16px;border:2px solid #333;background:#fff"></div>
<div class="a" style="left:980px;top:772px;width:16px;height:16px;border:2px solid #333;background:#fff"></div><svg style="left:983px;top:776px" width="10" height="8"><path d="M0.5 3.5 L3.5 6.5 L9.5 0.5" stroke="#4a4a4a" stroke-width="1.9" fill="none"/></svg>
<div class="t" style="left:1100px;top:772.5px;width:28px;text-align:right;font-size:15px;color:#111">4</div>
<div class="a" style="left:442px;top:791px;width:693px;height:18.6px;background:#efefef"></div>
<div class="a" style="left:401px;top:790px;width:41px;height:20px;background:#fdd08a;border-bottom:1px solid #a9bfda;border-right:1px solid #a9bfda"></div>
<div class="t" style="left:446px;top:792.5px;font-size:15px;letter-spacing:-0.8px;color:#111">P23380001</div>
<div class="a" style="left:894px;top:792px;width:16px;height:16px;border:2px solid #333;background:#fff"></div>
<div class="a" style="left:980px;top:792px;width:16px;height:16px;border:2px solid #333;background:#fff"></div><svg style="left:983px;top:796px" width="10" height="8"><path d="M0.5 3.5 L3.5 6.5 L9.5 0.5" stroke="#4a4a4a" stroke-width="1.9" fill="none"/></svg>
<div class="t" style="left:1100px;top:792.5px;width:28px;text-align:right;font-size:15px;color:#111">3</div>
<div class="a" style="left:401px;top:810px;width:41px;height:20px;background:#e4ebf6;border-bottom:1px solid #a9bfda;border-right:1px solid #a9bfda"></div>
<div class="t" style="left:446px;top:812.5px;font-size:15px;letter-spacing:-0.8px;color:#111">P23380002</div>
<div class="a" style="left:894px;top:812px;width:16px;height:16px;border:2px solid #333;background:#fff"></div>
<div class="a" style="left:980px;top:812px;width:16px;height:16px;border:2px solid #333;background:#fff"></div><svg style="left:983px;top:816px" width="10" height="8"><path d="M0.5 3.5 L3.5 6.5 L9.5 0.5" stroke="#4a4a4a" stroke-width="1.9" fill="none"/></svg>
<div class="t" style="left:1100px;top:812.5px;width:28px;text-align:right;font-size:15px;color:#111">4</div>
<div class="a" style="left:442px;top:831px;width:693px;height:18.6px;background:#efefef"></div>
<div class="a" style="left:401px;top:830px;width:41px;height:20px;background:#e4ebf6;border-bottom:1px solid #a9bfda;border-right:1px solid #a9bfda"></div>
<div class="t" style="left:446px;top:832.5px;font-size:15px;letter-spacing:-0.8px;color:#111">P23380003</div>
<div class="a" style="left:894px;top:832px;width:16px;height:16px;border:2px solid #333;background:#fff"></div><svg style="left:897px;top:836px" width="10" height="8"><path d="M0.5 3.5 L3.5 6.5 L9.5 0.5" stroke="#4a4a4a" stroke-width="1.9" fill="none"/></svg>
<div class="a" style="left:980px;top:832px;width:16px;height:16px;border:2px solid #333;background:#fff"></div>
<div class="t" style="left:1100px;top:832.5px;width:28px;text-align:right;font-size:15px;color:#111">4</div>
<div class="a" style="left:401px;top:850px;width:41px;height:20px;background:#e4ebf6;border-bottom:1px solid #a9bfda;border-right:1px solid #a9bfda"></div>
<div class="t" style="left:446px;top:852.5px;font-size:15px;letter-spacing:-0.8px;color:#111">P23390001</div>
<div class="a" style="left:894px;top:852px;width:16px;height:16px;border:2px solid #333;background:#fff"></div>
<div class="a" style="left:980px;top:852px;width:16px;height:16px;border:2px solid #333;background:#fff"></div><svg style="left:983px;top:856px" width="10" height="8"><path d="M0.5 3.5 L3.5 6.5 L9.5 0.5" stroke="#4a4a4a" stroke-width="1.9" fill="none"/></svg>
<div class="t" style="left:1100px;top:852.5px;width:28px;text-align:right;font-size:15px;color:#111">2</div>
<div class="a" style="left:442px;top:871px;width:693px;height:18.6px;background:#efefef"></div>
<div class="a" style="left:401px;top:870px;width:41px;height:20px;background:#e4ebf6;border-bottom:1px solid #a9bfda;border-right:1px solid #a9bfda"></div>
<div class="t" style="left:446px;top:872.5px;font-size:15px;letter-spacing:-0.8px;color:#111">P23390002</div>
<div class="a" style="left:894px;top:872px;width:16px;height:16px;border:2px solid #333;background:#fff"></div>
<div class="a" style="left:980px;top:872px;width:16px;height:16px;border:2px solid #333;background:#fff"></div>
<div class="t" style="left:1100px;top:872.5px;width:28px;text-align:right;font-size:15px;color:#111">1</div>
<div class="a" style="left:401px;top:890px;width:41px;height:20px;background:#e4ebf6;border-bottom:1px solid #a9bfda;border-right:1px solid #a9bfda"></div>
<div class="t" style="left:446px;top:892.5px;font-size:15px;letter-spacing:-0.8px;color:#111">P23390003</div>
<div class="a" style="left:894px;top:892px;width:16px;height:16px;border:2px solid #333;background:#fff"></div>
<div class="a" style="left:980px;top:892px;width:16px;height:16px;border:2px solid #333;background:#fff"></div>
<div class="t" style="left:1100px;top:892.5px;width:28px;text-align:right;font-size:15px;color:#111">1</div>
<div class="a" style="left:442px;top:911px;width:693px;height:18.6px;background:#efefef"></div>
<div class="a" style="left:401px;top:910px;width:41px;height:20px;background:#e4ebf6;border-bottom:1px solid #a9bfda;border-right:1px solid #a9bfda"></div>
<div class="t" style="left:446px;top:912.5px;font-size:15px;letter-spacing:-0.8px;color:#111">T2335</div>
<div class="a" style="left:894px;top:912px;width:16px;height:16px;border:2px solid #333;background:#fff"></div>
<div class="a" style="left:980px;top:912px;width:16px;height:16px;border:2px solid #333;background:#fff"></div>
<div class="t" style="left:1100px;top:912.5px;width:28px;text-align:right;font-size:15px;color:#111">5</div>
<div class="a" style="left:856px;top:290px;width:1px;height:640px;border-left:1px dotted #c4c4c4"></div>
<div class="a" style="left:948px;top:290px;width:1px;height:640px;border-left:1px dotted #c4c4c4"></div>
<div class="a" style="left:1029px;top:290px;width:1px;height:640px;border-left:1px dotted #c4c4c4"></div>
<div class="a" style="left:1130px;top:290px;width:1px;height:640px;border-left:1px dotted #c4c4c4"></div>
<div class="a" style="left:442px;top:288px;width:290px;height:2px;background:#f2a24c"></div>
<div class="a" style="left:442px;top:789px;width:290px;height:23px;border:1px solid #000;border-top-width:2px;border-bottom-width:3px"></div>
<div class="a" style="left:401px;top:930px;width:734px;height:6px;background:#fff"></div>
<div class="a" style="left:856px;top:929px;width:1px;height:1px;background:#c8c8c8"></div>
<div class="a" style="left:948px;top:929px;width:1px;height:1px;background:#c8c8c8"></div>
<div class="a" style="left:1029px;top:929px;width:1px;height:1px;background:#c8c8c8"></div>
<div class="a" style="left:1130px;top:929px;width:1px;height:1px;background:#c8c8c8"></div>
<div class="a" style="left:442px;top:929px;width:693px;height:1px;background:#c8c8c8"></div>
<div class="a" style="left:1135px;top:252px;width:20px;height:684px;background:#7398c0"></div>
<div class="a" style="left:1135px;top:252px;width:20px;height:20px;background:linear-gradient(90deg,#d8e6f7 50%,#c3d7f1 50%);border:1px solid #4b5f86"></div>
<svg style="left:1140px;top:257px" width="10" height="7"><path d="M0 7 L5 0 L10 7 Z" fill="#3b4566"/></svg>
<div class="a" style="left:1135px;top:835px;width:19px;height:80px;background:linear-gradient(90deg,#d8e6f7 50%,#c3d7f1 50%);border:1px solid #6b8bb5"></div>
<div class="a" style="left:1135px;top:916px;width:19px;height:19px;background:linear-gradient(90deg,#d8e6f7 50%,#c3d7f1 50%);border:1px solid #6b8bb5"></div>
<svg style="left:1140px;top:923px" width="10" height="7"><path d="M0 0 L5 7 L10 0 Z" fill="#3b4566"/></svg>
<div class="a" style="left:401px;top:936px;width:734px;height:19px;background:#7398c0;border-top:1px solid #4b5f86"></div>
<div class="a" style="left:401px;top:936px;width:503px;height:19px;background:linear-gradient(#d8e6f7 50%,#bcd3ee 50%);border:1px solid #6b8bb5"></div>
<div class="a" style="left:401px;top:936px;width:20px;height:19px;background:linear-gradient(#d8e6f7 50%,#bcd3ee 50%);border:1px solid #4b5f86"></div>
<svg style="left:407px;top:941px" width="7" height="10"><path d="M7 0 L0 5 L7 10 Z" fill="#3b4566"/></svg>
<div class="a" style="left:1115px;top:936px;width:20px;height:19px;background:linear-gradient(#d8e6f7 50%,#bcd3ee 50%);border:1px solid #6b8bb5"></div>
<svg style="left:1122px;top:941px" width="7" height="10"><path d="M0 0 L7 5 L0 10 Z" fill="#3b4566"/></svg>
<div class="a" style="left:1135px;top:936px;width:19px;height:19px;background:#8aa8cc"></div>
<div class="a" style="left:404px;top:966px;width:82px;height:25px;background:#e1e1e1;border:1px solid #adadad"></div>
<svg style="left:415px;top:972px" width="15" height="13"><path d="M2 1.5 L13 11.5 M13 1.5 L2 11.5" stroke="#e8521f" stroke-width="3" stroke-linecap="round"/></svg>
<div class="t" style="left:437px;top:970.5px;font-size:14px;letter-spacing:-0.6px;color:#111">Fermer</div>
<div class="a" style="left:1164px;top:245px;width:746px;height:34px;background:linear-gradient(#ececec,#f8f8f8)"></div>
<div class="a" style="left:1164px;top:278px;width:746px;height:679px;background:#fff;border-left:1px solid #a8a8a8;border-top:1px solid #a8a8a8;border-bottom:2px solid #8a8a8a"></div>
<svg style="left:1164px;top:253px" width="240" height="28"><path d="M128 25.5 L140 5 Q142 1.5 147 1.5 H206 Q211 1.5 213 5 L226 25.5" fill="#f1f1f1" stroke="#a8a8a8" stroke-width="1"/><path d="M7 25.5 L20 5 Q22 1.5 27 1.5 H118 Q123 1.5 125 5 L137 25.5" fill="#fbfbfb" stroke="#a8a8a8" stroke-width="1"/><rect x="7.5" y="25" width="129" height="3" fill="#fff"/></svg>
<svg style="left:1185px;top:257px" width="18" height="22"><path d="M6 1 H14 L17 4 V16 H6 Z" fill="#e9dfcf" stroke="#cdbfa8" stroke-width="0.8"/><path d="M1 6 H9 L12 9 V21 H1 Z" fill="#f2ebdd" stroke="#cdbfa8" stroke-width="0.8"/></svg>
<div class="t" style="left:1207px;top:260px;font-size:14.7px;font-weight:bold;color:#111;letter-spacing:0px">Généralités</div>
<div class="t" style="left:1299px;top:260px;font-size:14px;color:#1a2a4a;letter-spacing:-0.3px">Qui, quand ?</div>
<div class="a" style="left:1171px;top:284px;width:687px;height:31px;background:#00a7b5"></div>
<div class="t" style="left:1211px;top:295px;font-size:14px;font-weight:bold;color:#f4fbfb;letter-spacing:-0.1px">GENERALITES</div>
<div class="t" style="left:1098px;top:327px;width:200px;text-align:right;font-size:14.2px;color:#111;letter-spacing:-0.25px">Série</div>
<div class="a" style="left:1307px;top:323px;width:250px;height:25px;background:#e9eef9"></div>
<div class="t" style="left:1311px;top:328.55px;font-size:14.5px;font-weight:bold;letter-spacing:0.4px;color:#111">P23380001</div>
<div class="t" style="left:1098px;top:358px;width:200px;text-align:right;font-size:14.2px;color:#111;letter-spacing:-0.25px">Libellé série</div>
<div class="a" style="left:1307px;top:354px;width:250px;height:25px;background:#e9eef9"></div>
<div class="t" style="left:1311px;top:359.55px;font-size:14.5px;font-weight:bold;letter-spacing:0.4px;color:#111">Atelier U1 2023S38</div>
<div class="t" style="left:1098px;top:389px;width:200px;text-align:right;font-size:14.2px;color:#111;letter-spacing:-0.25px">Gestionnaire</div>
<div class="a" style="left:1307px;top:385px;width:250px;height:25px;background:#e9eef9"></div>
<div class="t" style="left:1311px;top:390.55px;font-size:14.5px;font-weight:bold;letter-spacing:0.4px;color:#111">U1</div>
<div class="a" style="left:1561px;top:387px;width:18px;height:18px;background:#fff;border:2px solid #c8c8c8"></div>
<div class="t" style="left:1561px;top:389px;width:18px;text-align:center;font-size:14px;font-weight:bold;color:#111">?</div>
<div class="t" style="left:1586px;top:390px;font-size:14.2px;color:#111;letter-spacing:-0.25px">Site de production 1</div>
<div class="t" style="left:1510px;top:358px;width:200px;text-align:right;font-size:14.2px;color:#111;letter-spacing:-0.25px">Unité Production</div>
<div class="a" style="left:1719px;top:354px;width:113px;height:22px;background:#e9eef9"></div>
<div class="t" style="left:1723px;top:358.05px;font-size:14.5px;font-weight:bold;letter-spacing:0.4px;color:#111">U1</div>
<div class="a" style="left:1836px;top:356px;width:18px;height:18px;background:#fff;border:2px solid #c8c8c8"></div>
<div class="t" style="left:1836px;top:358px;width:18px;text-align:center;font-size:14px;font-weight:bold;color:#111">?</div>
<div class="a" style="left:1171px;top:423px;width:687px;height:31px;background:#00a7b5"></div>
<div class="t" style="left:1211px;top:434px;font-size:14px;font-weight:bold;color:#f4fbfb;letter-spacing:-0.1px">PLANIFICATION ET SUIVI</div>
<div class="t" style="left:1098px;top:465px;width:200px;text-align:right;font-size:14.2px;color:#111;letter-spacing:-0.25px">Date prévue début</div>
<div class="a" style="left:1307px;top:461px;width:250px;height:25px;background:#e9eef9"></div>
<div class="t" style="left:1311px;top:466.55px;font-size:14.5px;font-weight:bold;letter-spacing:0.4px;color:#111">12/09/2023</div>
<div class="a" style="left:1561px;top:463px;width:18px;height:18px;background:#fff;border:2px solid #c8c8c8"></div>
<div class="t" style="left:1561px;top:465px;width:18px;text-align:center;font-size:14px;font-weight:bold;color:#111">?</div>
<div class="t" style="left:1098px;top:496px;width:200px;text-align:right;font-size:14.2px;color:#111;letter-spacing:-0.25px">Date prévue fin</div>
<div class="a" style="left:1307px;top:492px;width:250px;height:25px;background:#e9eef9"></div>
<div class="t" style="left:1311px;top:497.55px;font-size:14.5px;font-weight:bold;letter-spacing:0.4px;color:#111">21/09/2023</div>
<div class="a" style="left:1561px;top:494px;width:18px;height:18px;background:#fff;border:2px solid #c8c8c8"></div>
<div class="t" style="left:1561px;top:496px;width:18px;text-align:center;font-size:14px;font-weight:bold;color:#111">?</div>
<div class="t" style="left:1098px;top:527px;width:200px;text-align:right;font-size:14.2px;color:#111;letter-spacing:-0.25px">Date réelle debut</div>
<div class="a" style="left:1307px;top:523px;width:250px;height:25px;background:#e9eef9"></div>
<div class="t" style="left:1311px;top:528.55px;font-size:14.5px;font-weight:bold;letter-spacing:0.4px;color:#111">16/08/2023</div>
<div class="a" style="left:1561px;top:525px;width:18px;height:18px;background:#fff;border:2px solid #c8c8c8"></div>
<div class="t" style="left:1561px;top:527px;width:18px;text-align:center;font-size:14px;font-weight:bold;color:#111">?</div>
<div class="t" style="left:1098px;top:558px;width:200px;text-align:right;font-size:14.2px;color:#111;letter-spacing:-0.25px">Date réelle fin</div>
<div class="a" style="left:1307px;top:554px;width:250px;height:25px;background:#e9eef9"></div>
<div class="t" style="left:1311px;top:559.55px;font-size:14.5px;font-weight:bold;letter-spacing:0.4px;color:#111">16/08/2023</div>
<div class="a" style="left:1561px;top:556px;width:18px;height:18px;background:#fff;border:2px solid #c8c8c8"></div>
<div class="t" style="left:1561px;top:558px;width:18px;text-align:center;font-size:14px;font-weight:bold;color:#111">?</div>
<div class="a" style="left:1171px;top:586px;width:687px;height:31px;background:#00a7b5"></div>
<div class="t" style="left:1211px;top:597px;font-size:14px;font-weight:bold;color:#f4fbfb;letter-spacing:-0.1px">STATUT</div>
<div class="t" style="left:1102px;top:626px;width:200px;text-align:right;font-size:14.2px;color:#111;letter-spacing:-0.5px">Fabriqué partiellement</div>
<div class="a" style="left:1307px;top:624px;width:14px;height:20px;background:#e9eef9"></div>
<div class="a" style="left:1308px;top:628px;width:12px;height:12px;background:#fff;border:1px solid #c4c4c4"></div>
<div class="t" style="left:1098px;top:651px;width:200px;text-align:right;font-size:14.2px;color:#111;letter-spacing:-0.25px">Fabriquée</div>
<div class="a" style="left:1307px;top:649px;width:14px;height:20px;background:#e9eef9"></div>
<div class="a" style="left:1308px;top:653px;width:12px;height:12px;background:#fff;border:1px solid #c4c4c4"></div>
<svg style="left:1310px;top:656px" width="8" height="6"><path d="M0.5 3 L3 5.5 L7.5 0.5" stroke="#b5b5b5" stroke-width="1.2" fill="none"/></svg>
<div class="t" style="left:1098px;top:676px;width:200px;text-align:right;font-size:14.2px;color:#111;letter-spacing:-0.25px">Lancement atelier</div>
<div class="a" style="left:1307px;top:674px;width:14px;height:20px;background:#e9eef9"></div>
<div class="a" style="left:1308px;top:678px;width:12px;height:12px;background:#fff;border:1px solid #c4c4c4"></div>
<div class="a" style="left:1171px;top:698px;width:687px;height:31px;background:#00a7b5"></div>
<div class="t" style="left:1211px;top:709px;font-size:14px;font-weight:bold;color:#f4fbfb;letter-spacing:-0.1px">SUIVI</div>
<div class="t" style="left:1098px;top:739.5px;width:200px;text-align:right;font-size:14.2px;color:#111;letter-spacing:-0.25px">Quantité lancée</div>
<div class="a" style="left:1307px;top:736px;width:125px;height:25px;background:#e9eef9"></div>
<div class="t" style="left:1307px;top:741.55px;width:95px;text-align:center;font-size:14.5px;font-weight:bold;letter-spacing:0.3px;color:#111">3,00</div>
<div class="t" style="left:1098px;top:770.5px;width:200px;text-align:right;font-size:14.2px;color:#111;letter-spacing:-0.25px">Quantité fabriquée</div>
<div class="a" style="left:1307px;top:767px;width:125px;height:25px;background:#e9eef9"></div>
<div class="t" style="left:1307px;top:772.55px;width:95px;text-align:center;font-size:14.5px;font-weight:bold;letter-spacing:0.3px;color:#111">3,00</div>
<div class="t" style="left:1098px;top:801.5px;width:200px;text-align:right;font-size:14.2px;color:#111;letter-spacing:-0.25px">Quantité restante</div>
<div class="a" style="left:1307px;top:798px;width:125px;height:25px;background:#e9eef9"></div>
<div class="t" style="left:1307px;top:803.55px;width:95px;text-align:center;font-size:14.5px;font-weight:bold;letter-spacing:0.3px;color:#111">0,00</div>
<div class="a" style="left:1165px;top:930px;width:745px;height:26px;background:#f0f0f0"></div>
<div class="a" style="left:1191px;top:930px;width:646px;height:18px;background:#cdcdcd"></div>
<svg style="left:1176px;top:934px" width="8" height="10"><path d="M6.5 1 L2 5 L6.5 9" stroke="#444" stroke-width="2" fill="none"/></svg>
<svg style="left:1898px;top:934px" width="8" height="10"><path d="M1.5 1 L6 5 L1.5 9" stroke="#444" stroke-width="2" fill="none"/></svg>
<div class="a" style="left:1168px;top:966px;width:99px;height:25px;background:#d5d5d5;border:1px solid #c2c2c2"></div>
<div class="t" style="left:1199px;top:971px;font-size:13.8px;color:#858585;letter-spacing:-0.1px">Validation</div>
<svg style="left:1180px;top:972px" width="14" height="12"><path d="M1 6 L5 10 L13 1.5" stroke="#b4b4b4" stroke-width="2.4" fill="none"/></svg>
<div class="a" style="left:1273px;top:966px;width:99px;height:25px;background:#d5d5d5;border:1px solid #c2c2c2"></div>
<div class="t" style="left:1286px;top:971px;font-size:13.8px;color:#858585;letter-spacing:-0.1px">Sauvegarde</div>
<div class="a" style="left:1378px;top:966px;width:99px;height:25px;background:#d5d5d5;border:1px solid #c2c2c2"></div>
<div class="t" style="left:1412px;top:971px;font-size:13.8px;color:#858585;letter-spacing:-0.1px">Abandon</div>
<svg style="left:1393px;top:972px" width="14" height="13"><path d="M1.5 1.5 L12.5 11.5 M12.5 1.5 L1.5 11.5" stroke="#b0b0b0" stroke-width="2.4"/></svg>
<div class="a" style="left:511px;top:35px;width:317px;height:990px;background:#f2f2f2;border:1px solid #c9c9c9;border-right-color:#d6d6d6"></div>
<div class="a" style="left:512px;top:36px;width:38px;height:978px;background:#f0f0f0"></div>
<div class="a" style="left:828px;top:38px;width:3px;height:976px;background:linear-gradient(90deg,#6c6c6c,#9a9a9a 60%,rgba(160,160,160,0))"></div>
<div class="t" style="left:555px;top:44.45px;font-size:15.5px;letter-spacing:-0.38px;color:#1c1c1c">Gestion Lignes (Maj+F3)</div>
<div class="a" style="left:550px;top:69.40px;width:273px;height:1px;background:#d7d7d7"></div>
<div class="a" style="left:515px;top:75.25px;width:310px;height:27.5px;background:#8f96f4;border-top:2px solid #8ecbf5"></div>
<div class="t" style="left:555px;top:80.70px;font-size:15.5px;letter-spacing:-0.38px;color:#1c1c1c">Création (F9)</div>
<div class="t" style="left:555px;top:108.20px;font-size:15.5px;letter-spacing:-0.38px;color:#1c1c1c">Modification (F1)</div>
<div class="t" style="left:555px;top:135.70px;font-size:15.5px;letter-spacing:-0.38px;color:#8d8d8d">Suppression (F6)</div>
<div class="t" style="left:555px;top:163.20px;font-size:15.5px;letter-spacing:-0.38px;color:#1c1c1c">Détail (F8)</div>
<div class="t" style="left:555px;top:190.70px;font-size:15.5px;letter-spacing:-0.38px;color:#1c1c1c">Consultation Inf. Techniques</div>
<div class="t" style="left:555px;top:218.20px;font-size:15.5px;letter-spacing:-0.38px;color:#8d8d8d">Historique (F10)</div>
<div class="t" style="left:555px;top:245.70px;font-size:15.5px;letter-spacing:-0.38px;color:#8d8d8d">Eléments Récents (Maj+F8)</div>
<div class="t" style="left:555px;top:273.20px;font-size:15.5px;letter-spacing:-0.38px;color:#1c1c1c">Historique Messages / Entité</div>
<div class="t" style="left:555px;top:300.70px;font-size:15.5px;letter-spacing:-0.38px;color:#8d8d8d">Envoyer un message</div>
<div class="a" style="left:550px;top:325.65px;width:273px;height:1px;background:#d7d7d7"></div>
<div class="t" style="left:555px;top:336.95px;font-size:15.5px;letter-spacing:-0.38px;color:#1c1c1c">Nouvelle Tâche</div>
<div class="t" style="left:555px;top:364.45px;font-size:15.5px;letter-spacing:-0.38px;color:#8d8d8d">Tâches de l'Entité</div>
<div class="a" style="left:550px;top:389.40px;width:273px;height:1px;background:#d7d7d7"></div>
<div class="t" style="left:555px;top:400.70px;font-size:15.5px;letter-spacing:-0.38px;color:#1c1c1c">Joindre un document</div>
<div class="t" style="left:555px;top:428.20px;font-size:15.5px;letter-spacing:-0.38px;color:#1c1c1c">Documents GED</div>
<div class="a" style="left:550px;top:453.15px;width:273px;height:1px;background:#d7d7d7"></div>
<div class="t" style="left:555px;top:464.45px;font-size:15.5px;letter-spacing:-0.38px;color:#1c1c1c">Accès à</div>
<svg style="left:806px;top:467.25px" width="7" height="10"><path d="M1 1 L5.5 5 L1 9" stroke="#555" stroke-width="1.5" fill="none"/></svg>
<div class="a" style="left:550px;top:489.40px;width:273px;height:1px;background:#d7d7d7"></div>
<div class="t" style="left:555px;top:500.70px;font-size:15.5px;letter-spacing:-0.38px;color:#1c1c1c">Lancement Atelier</div>
<svg style="left:806px;top:503.50px" width="7" height="10"><path d="M1 1 L5.5 5 L1 9" stroke="#555" stroke-width="1.5" fill="none"/></svg>
<div class="a" style="left:550px;top:525.65px;width:273px;height:1px;background:#d7d7d7"></div>
<div class="t" style="left:555px;top:536.95px;font-size:15.5px;letter-spacing:-0.38px;color:#1c1c1c">Déclaration de Fabrication</div>
<svg style="left:806px;top:539.75px" width="7" height="10"><path d="M1 1 L5.5 5 L1 9" stroke="#555" stroke-width="1.5" fill="none"/></svg>
<div class="t" style="left:555px;top:564.45px;font-size:15.5px;letter-spacing:-0.38px;color:#1c1c1c">His. Déclarations / Série</div>
<div class="a" style="left:550px;top:589.40px;width:273px;height:1px;background:#d7d7d7"></div>
<div class="t" style="left:555px;top:600.70px;font-size:15.5px;letter-spacing:-0.38px;color:#1c1c1c">Informations Suivies</div>
<div class="a" style="left:550px;top:625.65px;width:273px;height:1px;background:#d7d7d7"></div>
<div class="t" style="left:555px;top:636.95px;font-size:15.5px;letter-spacing:-0.38px;color:#1c1c1c">Déclaration Co-Produits</div>
<div class="a" style="left:550px;top:661.90px;width:273px;height:1px;background:#d7d7d7"></div>
<div class="t" style="left:555px;top:673.20px;font-size:15.5px;letter-spacing:-0.38px;color:#1c1c1c">Composants Rattachés</div>
<div class="t" style="left:555px;top:700.70px;font-size:15.5px;letter-spacing:-0.38px;color:#1c1c1c">Visualisation File d'Attente</div>
<div class="t" style="left:555px;top:728.20px;font-size:15.5px;letter-spacing:-0.38px;color:#1c1c1c">Caract. File d'Attente</div>
<div class="a" style="left:550px;top:753.15px;width:273px;height:1px;background:#d7d7d7"></div>
<div class="t" style="left:555px;top:764.45px;font-size:15.5px;letter-spacing:-0.38px;color:#1c1c1c">Solde Série (Maj+F6)</div>
<div class="t" style="left:555px;top:791.95px;font-size:15.5px;letter-spacing:-0.38px;color:#1c1c1c">Déblocage Séries</div>
<div class="t" style="left:555px;top:819.45px;font-size:15.5px;letter-spacing:-0.38px;color:#1c1c1c">Re-génération Séries</div>
<div class="a" style="left:550px;top:844.40px;width:273px;height:1px;background:#d7d7d7"></div>
<div class="t" style="left:555px;top:855.70px;font-size:15.5px;letter-spacing:-0.38px;color:#1c1c1c">Ma Présentation de Démarrage</div>
<div class="t" style="left:555px;top:883.20px;font-size:15.5px;letter-spacing:-0.38px;color:#1c1c1c">Actualiser la Présentation</div>
<div class="t" style="left:555px;top:910.70px;font-size:15.5px;letter-spacing:-0.38px;color:#1c1c1c">Présentations</div>
<svg style="left:806px;top:913.50px" width="7" height="10"><path d="M1 1 L5.5 5 L1 9" stroke="#555" stroke-width="1.5" fill="none"/></svg>
<div class="a" style="left:550px;top:935.65px;width:273px;height:1px;background:#d7d7d7"></div>
<div class="t" style="left:555px;top:946.95px;font-size:15.5px;letter-spacing:-0.38px;color:#1c1c1c">Définition Filtres et Tris</div>
<div class="t" style="left:555px;top:974.45px;font-size:15.5px;letter-spacing:-0.38px;color:#1c1c1c">Sélections Filtres et Tris</div>
<svg style="left:806px;top:977.25px" width="7" height="10"><path d="M1 1 L5.5 5 L1 9" stroke="#555" stroke-width="1.5" fill="none"/></svg>
<div class="t" style="left:555px;top:1001.95px;font-size:15.5px;letter-spacing:-0.38px;color:#1c1c1c">Condition par Défaut (Ctrl-F5)</div>
<svg style="left:661px;top:89px" width="22" height="33"><path d="M1.5 1.5 V25 L7 19.5 L11 29.5 L15 27.8 L11 18.5 H19 Z" fill="#fff" stroke="#000" stroke-width="2.2" stroke-linejoin="miter"/></svg>
</body></html>
